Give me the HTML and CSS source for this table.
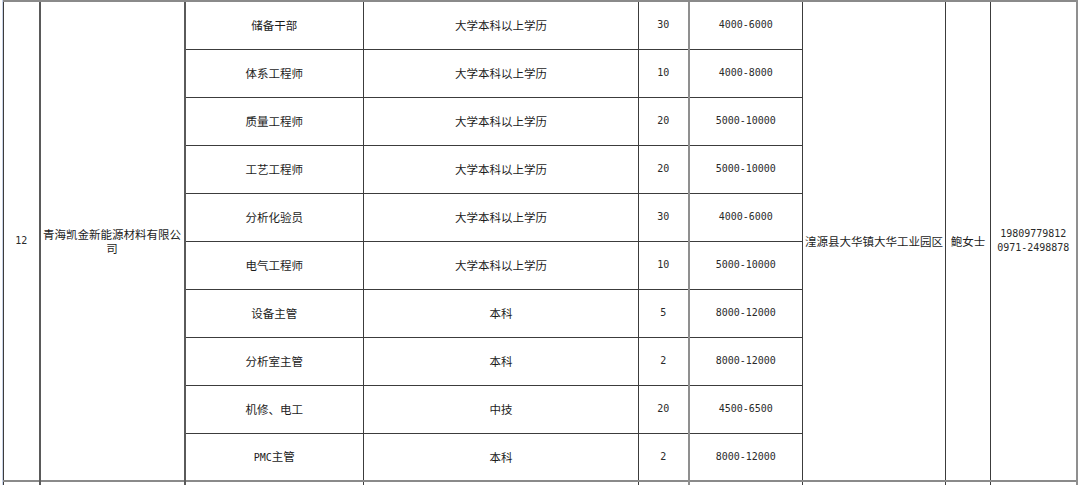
FILE: index.html
```html
<!DOCTYPE html>
<html lang="zh-CN">
<head>
<meta charset="utf-8">
<title>招聘信息</title>
<link rel="stylesheet" href="styles.css">
</head>
<body>
<div class="sheet">
<table class="jobs">
<colgroup>
<col class="c1"><col class="c2"><col class="c3"><col class="c4"><col class="c5"><col class="c6"><col class="c7"><col class="c8"><col class="c9">
</colgroup>
<tbody>
<tr>
<td class="n idx" rowspan="10">12</td>
<td class="cjk company" rowspan="10">青海凯金新能源材料有限公<br>司</td>
<td class="cjk pos">储备干部</td>
<td class="cjk edu">大学本科以上学历</td>
<td class="n cnt">30</td>
<td class="n pay">4000-6000</td>
<td class="cjk addr" rowspan="10">湟源县大华镇大华工业园区</td>
<td class="cjk who" rowspan="10">鲍女士</td>
<td class="n tel" rowspan="10">19809779812<br>0971-2498878</td>
</tr>
<tr><td class="cjk pos">体系工程师</td><td class="cjk edu">大学本科以上学历</td><td class="n cnt">10</td><td class="n pay">4000-8000</td></tr>
<tr><td class="cjk pos">质量工程师</td><td class="cjk edu">大学本科以上学历</td><td class="n cnt">20</td><td class="n pay">5000-10000</td></tr>
<tr><td class="cjk pos">工艺工程师</td><td class="cjk edu">大学本科以上学历</td><td class="n cnt">20</td><td class="n pay">5000-10000</td></tr>
<tr><td class="cjk pos">分析化验员</td><td class="cjk edu">大学本科以上学历</td><td class="n cnt">30</td><td class="n pay">4000-6000</td></tr>
<tr><td class="cjk pos">电气工程师</td><td class="cjk edu">大学本科以上学历</td><td class="n cnt">10</td><td class="n pay">5000-10000</td></tr>
<tr><td class="cjk pos">设备主管</td><td class="cjk edu">本科</td><td class="n cnt">5</td><td class="n pay">8000-12000</td></tr>
<tr><td class="cjk pos">分析室主管</td><td class="cjk edu">本科</td><td class="n cnt">2</td><td class="n pay">8000-12000</td></tr>
<tr><td class="cjk pos">机修、电工</td><td class="cjk edu">中技</td><td class="n cnt">20</td><td class="n pay">4500-6500</td></tr>
<tr><td class="cjk pos"><span class="lat">PMC</span>主管</td><td class="cjk edu">本科</td><td class="n cnt">2</td><td class="n pay">8000-12000</td></tr>
<tr class="next"><td class="idx"></td><td class="company"></td><td class="pos"></td><td class="edu"></td><td class="cnt"></td><td class="pay"></td><td class="addr"></td><td class="who"></td><td class="tel"></td></tr>
</tbody>
</table>
</div>
</body>
</html>
```

FILE: styles.css
```css
html, body {
  margin: 0;
  padding: 0;
  background: #ffffff;
  overflow: hidden;
  height: 485px;
}

.sheet {
  margin-left: 2px;
  border-left: 1px solid #c9d3e8;
  height: 485px;
}

.jobs {
  border-collapse: collapse;
  table-layout: fixed;
  width: 1073px;
  margin-top: 0;
  color: #1c1c1c;
}

.c1 { width: 36px; }
.c2 { width: 145px; }
.c3 { width: 179px; }
.c4 { width: 275px; }
.c5 { width: 50px; }
.c6 { width: 114px; }
.c7 { width: 143px; }
.c8 { width: 45px; }
.c9 { width: 86px; }

.jobs tr { height: 48px; }

.jobs td {
  border: 1px solid #3c3c3c;
  padding: 0 1px;
  text-align: center;
  vertical-align: middle;
  line-height: 14px;
  white-space: nowrap;
  overflow: hidden;
}

.jobs tr:first-child td { border-top: 2px solid #8a8a8a; }
.jobs tr.next td { border-top: 2px solid #8a8a8a; }
.jobs tr.next { height: 10px; }

.jobs td.company { border-left: 2px solid #5a5a5a; }
.jobs td.pos { border-left: 2px solid #5a5a5a; }
.jobs td.pay { border-left: 2px solid #8f8f8f; }
.jobs td.tel { border-right: 2px solid #8f8f8f; }

.cjk {
  font-family: "Noto Sans CJK SC", "Noto Sans", sans-serif;
  font-size: 11.5px;
}

.n {
  font-family: "DejaVu Sans Mono", "Liberation Mono", monospace;
  font-size: 10px;
  color: #2a2a2a;
}

.lat {
  font-family: "DejaVu Sans Mono", "Liberation Mono", monospace;
  font-size: 10px;
}

.company { text-align: center; }
.addr { text-align: left; }
```
